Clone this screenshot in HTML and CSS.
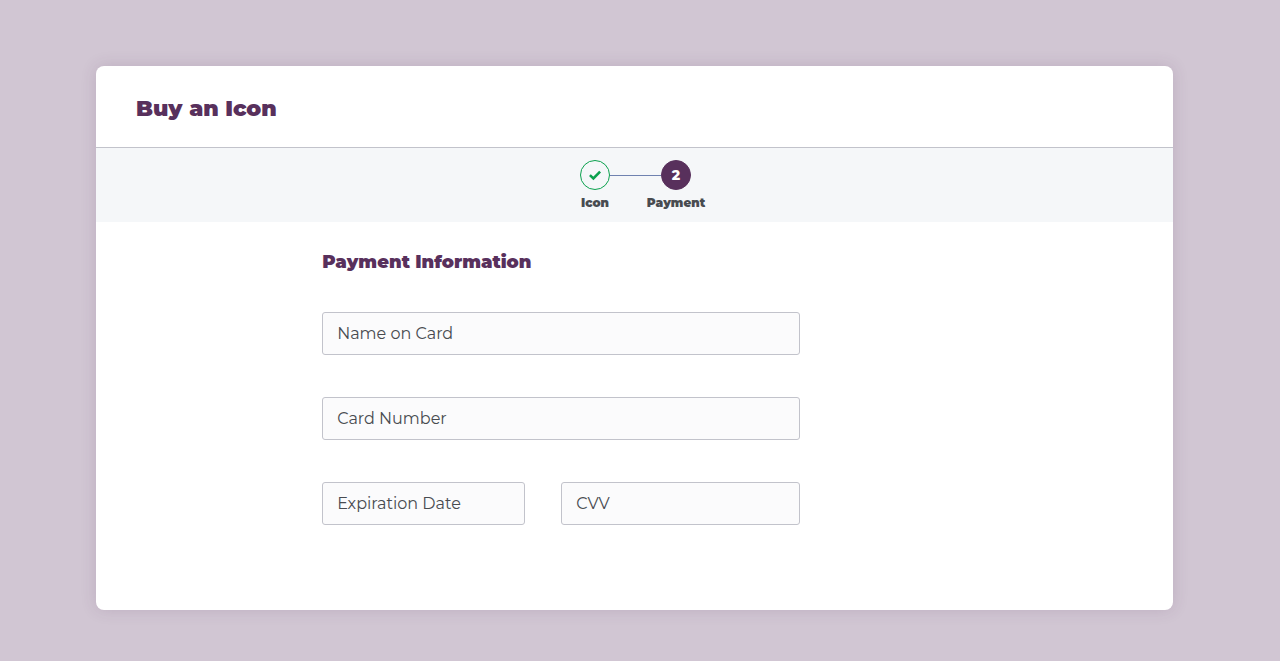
FILE: index.html
```html
<!DOCTYPE html>
<html lang="en">
<head>
<meta charset="utf-8">
<meta name="viewport" content="width=device-width, initial-scale=1">
<title>Buy an Icon</title>
<link rel="stylesheet" href="styles.css">
</head>
<body>
<main class="card">
  <header class="card-header">
    <h1 class="title">Buy an Icon</h1>
  </header>
  <ol class="steps">
    <li class="step step-done">
      <span class="step-circle">
        <svg class="check" viewBox="0 0 14 12" aria-hidden="true"><path d="M1.9 6.1 5.4 9.4 12.1 2.7" fill="none" stroke="currentColor" stroke-width="2.6"/></svg>
      </span>
      <span class="step-label">Icon</span>
    </li>
    <li class="step step-current" aria-current="step">
      <span class="step-circle">2</span>
      <span class="step-label">Payment</span>
    </li>
  </ol>
  <form class="form">
    <h2 class="subtitle">Payment Information</h2>
    <div class="fields">
      <input class="field" type="text" placeholder="Name on Card" aria-label="Name on Card">
      <input class="field" type="text" placeholder="Card Number" aria-label="Card Number">
      <div class="field-row">
        <input class="field" type="text" placeholder="Expiration Date" aria-label="Expiration Date">
        <input class="field" type="text" placeholder="CVV" aria-label="CVV">
      </div>
    </div>
  </form>
</main>
</body>
</html>
```
FILE: styles.css
```css
* {
  box-sizing: border-box;
}

body {
  margin: 0;
  padding: 66px 107px 51px 96px;
  background: #d1c6d3;
  color: #484b50;
  font-family: Montserrat, Inter, sans-serif;
}

.card {
  background: #fff;
  border-radius: 8px;
  box-shadow: 0 0 16px rgba(88, 48, 92, 0.16);
}

.card-header {
  padding: 29px 40px 24px;
  border-bottom: 1px solid #c2c3cb;
}

.title,
.subtitle {
  margin: 0;
  color: #58305c;
  font-weight: 900;
}

.title {
  font-size: 22px;
  line-height: 28px;
}

.subtitle {
  font-size: 18px;
  line-height: 24px;
}

.steps {
  display: grid;
  grid-template-columns: 81px 81px;
  justify-content: center;
  margin: 0;
  padding: 12px 0 11px 2px;
  background: #f5f7f9;
  list-style: none;
}

.step {
  position: relative;
  display: flex;
  flex-direction: column;
  align-items: center;
  gap: 5px;
}

.step-circle {
  display: flex;
  align-items: center;
  justify-content: center;
  width: 30px;
  height: 30px;
  border: 1px solid #58305c;
  border-radius: 50%;
  font-size: 14px;
  font-weight: 800;
}

.step-done .step-circle {
  border-color: #0ba14e;
  color: #0ba14e;
}

.step-current .step-circle {
  background: #58305c;
  color: #fff;
}

.step-done::after {
  content: "";
  position: absolute;
  top: 15px;
  left: calc(50% + 15px);
  width: calc(100% - 30px);
  border-top: 1px solid #6f82b0;
}

.check {
  width: 14px;
  height: 12px;
}

.step-label {
  font-size: 12px;
  font-weight: 900;
  line-height: 16px;
}

.form {
  width: 478px;
  max-width: 79%;
  margin-left: 21%;
  padding: 28px 0 85px;
}

.fields {
  display: grid;
  gap: 42px;
  margin-top: 38px;
}

.field-row {
  display: grid;
  grid-template-columns: 203fr 239fr;
  gap: 36px;
}

.field {
  width: 100%;
  min-width: 0;
  height: 43px;
  padding: 0 14px;
  border: 1px solid #c2c3cb;
  border-radius: 3px;
  background: #fbfbfc;
  color: #484b50;
  font-family: inherit;
  font-size: 16px;
}

.field::placeholder {
  color: #484b50;
  opacity: 1;
}
```
